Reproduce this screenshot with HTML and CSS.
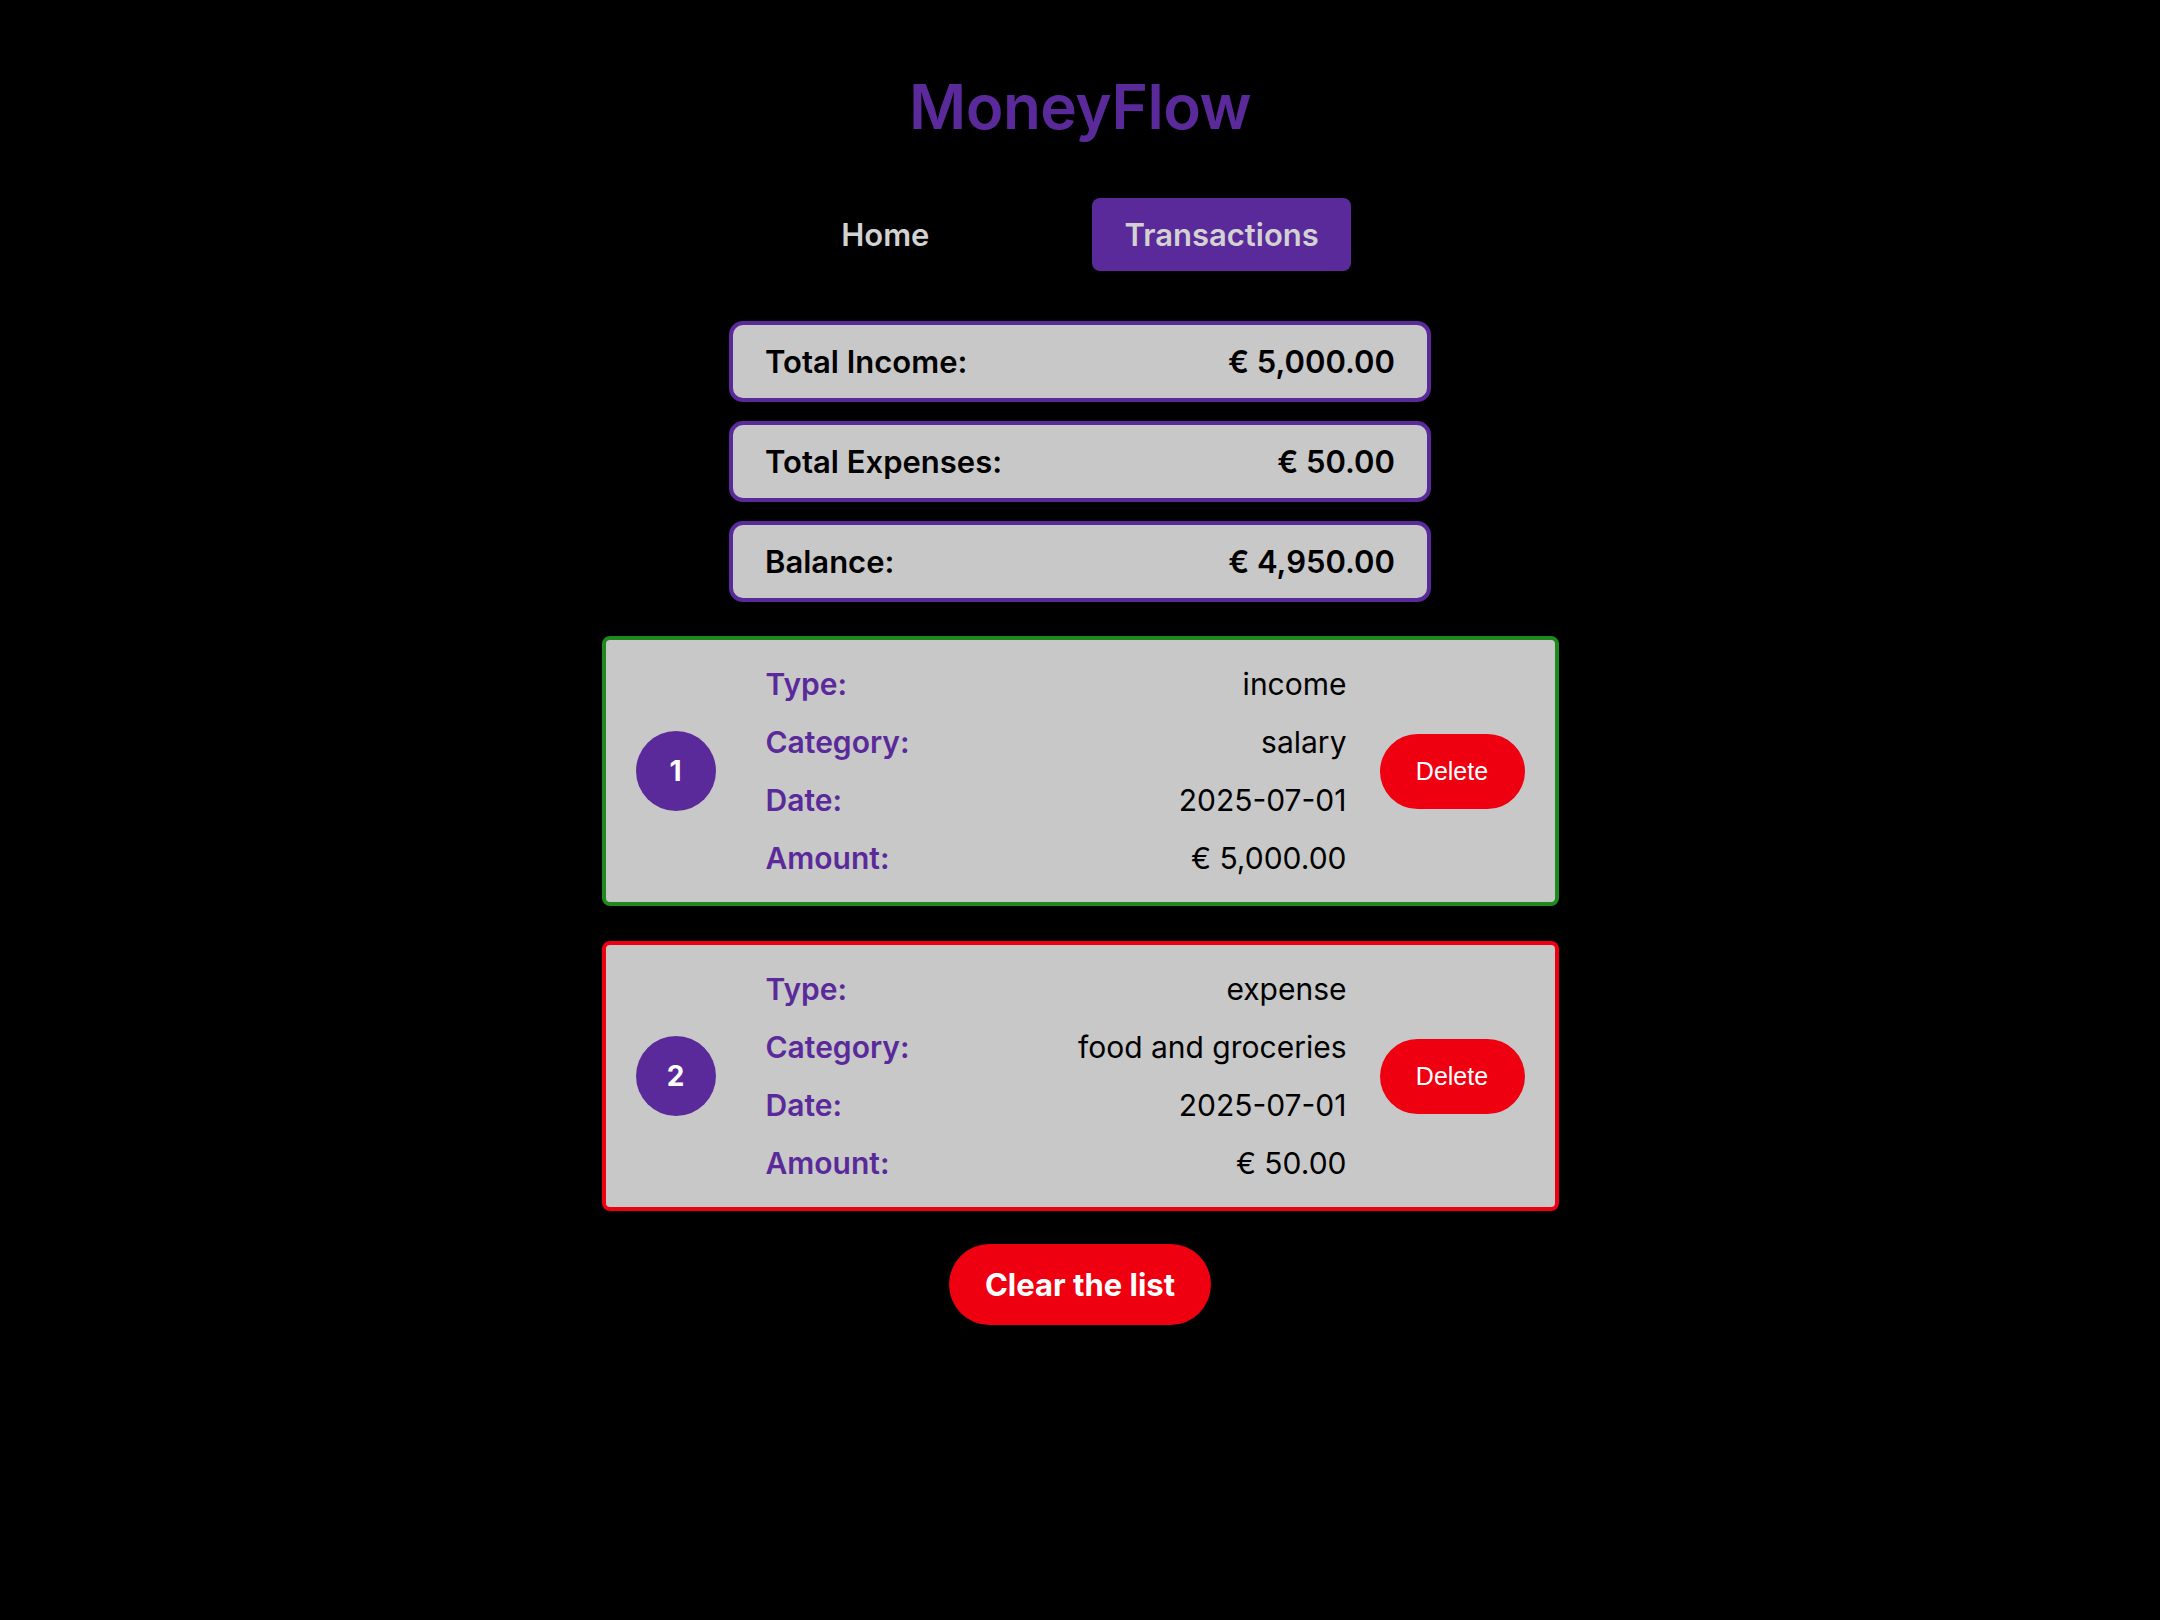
FILE: index.html
```html
<!DOCTYPE html>
<html lang="en">
<head>
<meta charset="utf-8">
<title>MoneyFlow</title>
<link rel="stylesheet" href="styles.css">
</head>
<body>
<main class="app">
  <h1 class="title">MoneyFlow</h1>
  <nav class="nav">
    <a class="nav-link">Home</a>
    <a class="nav-link active">Transactions</a>
  </nav>
  <section class="summary">
    <div class="sum-card"><span>Total Income:</span><span>€ 5,000.00</span></div>
    <div class="sum-card"><span>Total Expenses:</span><span>€ 50.00</span></div>
    <div class="sum-card"><span>Balance:</span><span>€ 4,950.00</span></div>
  </section>
  <section class="list">
    <div class="tx income">
      <div class="num">1</div>
      <div class="info">
        <div class="row"><span class="lbl">Type:</span><span class="val">income</span></div>
        <div class="row"><span class="lbl">Category:</span><span class="val">salary</span></div>
        <div class="row"><span class="lbl">Date:</span><span class="val">2025-07-01</span></div>
        <div class="row"><span class="lbl">Amount:</span><span class="val">€ 5,000.00</span></div>
      </div>
      <button class="del">Delete</button>
    </div>
    <div class="tx expense">
      <div class="num">2</div>
      <div class="info">
        <div class="row"><span class="lbl">Type:</span><span class="val">expense</span></div>
        <div class="row"><span class="lbl">Category:</span><span class="val">food and groceries</span></div>
        <div class="row"><span class="lbl">Date:</span><span class="val">2025-07-01</span></div>
        <div class="row"><span class="lbl">Amount:</span><span class="val">€ 50.00</span></div>
      </div>
      <button class="del">Delete</button>
    </div>
  </section>
  <button class="clear">Clear the list</button>
</main>
</body>
</html>
```

FILE: styles.css
```css
* { box-sizing: border-box; }
html, body { margin: 0; padding: 0; background: #000; }
body { font-family: "Inter", "Noto Sans", sans-serif; color: #000; }

.app {
  display: flex;
  flex-direction: column;
  align-items: center;
  padding-top: 68px;
}

.title {
  margin: 0;
  font-size: 62px;
  line-height: 78px;
  font-weight: 600;
  color: #5b2a9a;
  letter-spacing: -0.5px;
}

.nav {
  display: flex;
  gap: 131px;
  margin-top: 52px;
}
.nav-link {
  display: flex;
  align-items: center;
  height: 73px;
  padding: 0 32px;
  font-size: 31px;
  font-weight: 600;
  color: #d2d2d2;
  border-radius: 8px;
}
.nav-link.active { background: #5b2a9a; }

.summary {
  display: flex;
  flex-direction: column;
  gap: 19px;
  margin-top: 50px;
}
.sum-card {
  width: 702px;
  height: 81px;
  display: flex;
  justify-content: space-between;
  align-items: center;
  padding: 0 32px 0 32px;
  background: #c8c8c8;
  border: 4px solid #5b2a9a;
  border-radius: 14px;
  font-size: 31px;
  font-weight: 600;
}

.list {
  display: flex;
  flex-direction: column;
  gap: 35px;
  margin-top: 34px;
}
.tx {
  width: 957px;
  height: 270px;
  display: flex;
  align-items: center;
  padding: 0 30px;
  background: #c8c8c8;
  border: 4px solid;
  border-radius: 8px;
}
.tx.income { border-color: #1e8a1e; }
.tx.expense { border-color: #ee0010; }

.num {
  flex: none;
  width: 80px;
  height: 80px;
  border-radius: 50%;
  background: #5b2a9a;
  color: #fff;
  display: flex;
  align-items: center;
  justify-content: center;
  font-size: 28px;
  font-weight: 700;
}
.info {
  flex: 1;
  margin: 0 33px 0 50px;
  display: flex;
  flex-direction: column;
}
.row {
  height: 58px;
  display: flex;
  justify-content: space-between;
  align-items: center;
  font-size: 30px;
}
.lbl { color: #5b2a9a; font-weight: 600; }
.val { color: #000; font-weight: 400; }

.del {
  flex: none;
  width: 145px;
  height: 75px;
  border: none;
  border-radius: 38px;
  background: #ee0010;
  color: #fff;
  font-family: "Liberation Sans", Arial, sans-serif;
  font-size: 25px;
  padding: 0;
}

.clear {
  margin-top: 33px;
  height: 81px;
  padding: 0 36px;
  border: none;
  border-radius: 41px;
  background: #ee0010;
  color: #fff;
  font-family: "Inter", sans-serif;
  font-size: 31px;
  font-weight: 700;
}
```
